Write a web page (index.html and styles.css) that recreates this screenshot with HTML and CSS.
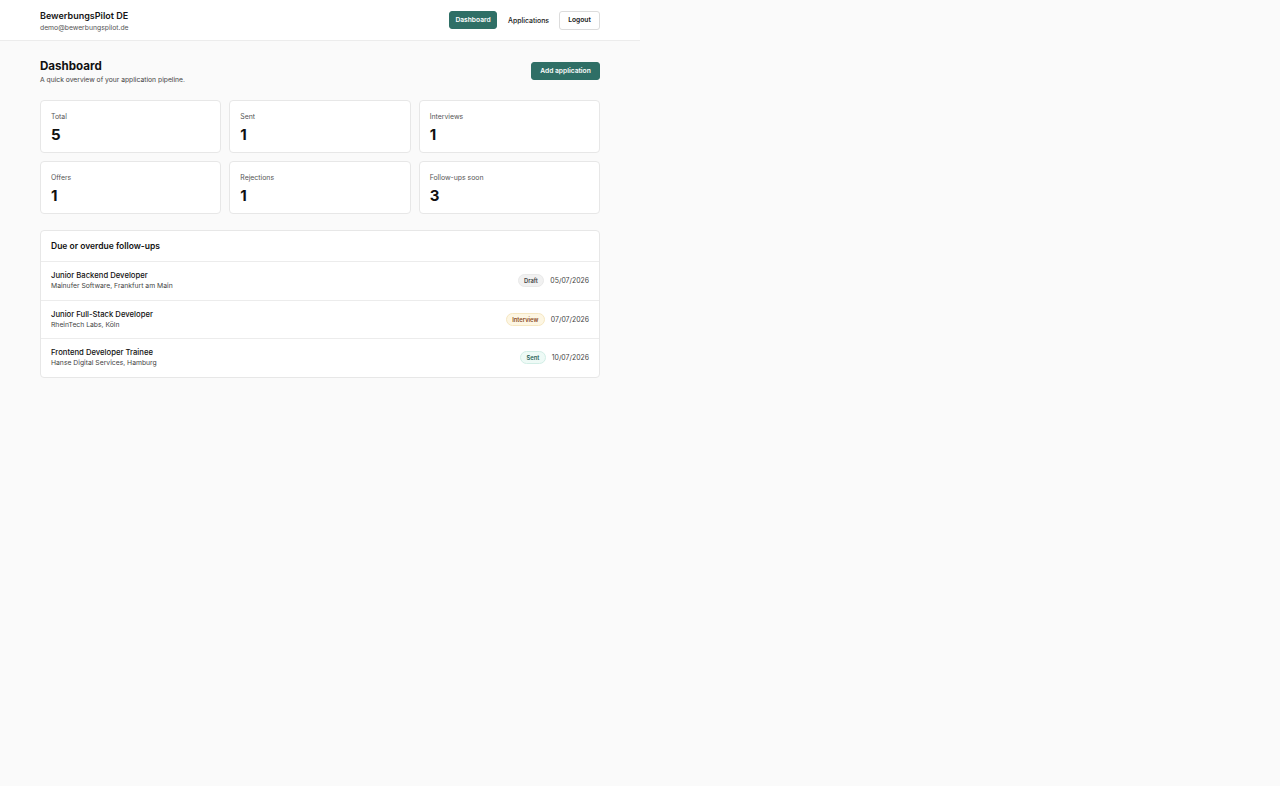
FILE: index.html
```html
<!DOCTYPE html>
<html lang="en">
<head>
<meta charset="utf-8">
<title>BewerbungsPilot DE – Dashboard</title>
<link rel="stylesheet" href="styles.css">
</head>
<body>
<div class="page">
  <header class="topbar">
    <div class="brand">
      <div class="brand-name">BewerbungsPilot DE</div>
      <div class="brand-email">demo@bewerbungspilot.de</div>
    </div>
    <nav class="nav">
      <a class="btn btn-primary nav-btn">Dashboard</a>
      <a class="nav-link">Applications</a>
      <a class="btn btn-outline nav-btn">Logout</a>
    </nav>
  </header>

  <main class="main">
    <div class="title-row">
      <div>
        <h1 class="title">Dashboard</h1>
        <p class="subtitle">A quick overview of your application pipeline.</p>
      </div>
      <a class="btn btn-primary add-btn">Add application</a>
    </div>

    <section class="stats">
      <div class="stat"><div class="stat-label">Total</div><div class="stat-value">5</div></div>
      <div class="stat"><div class="stat-label">Sent</div><div class="stat-value">1</div></div>
      <div class="stat"><div class="stat-label">Interviews</div><div class="stat-value">1</div></div>
      <div class="stat"><div class="stat-label">Offers</div><div class="stat-value">1</div></div>
      <div class="stat"><div class="stat-label">Rejections</div><div class="stat-value">1</div></div>
      <div class="stat"><div class="stat-label">Follow-ups soon</div><div class="stat-value">3</div></div>
    </section>

    <section class="panel">
      <h2 class="panel-title">Due or overdue follow-ups</h2>
      <div class="row">
        <div class="row-text">
          <div class="row-title">Junior Backend Developer</div>
          <div class="row-sub">Mainufer Software, Frankfurt am Main</div>
        </div>
        <div class="row-meta">
          <span class="badge badge-draft">Draft</span>
          <span class="date">05/07/2026</span>
        </div>
      </div>
      <div class="row">
        <div class="row-text">
          <div class="row-title">Junior Full-Stack Developer</div>
          <div class="row-sub">RheinTech Labs, Köln</div>
        </div>
        <div class="row-meta">
          <span class="badge badge-interview">Interview</span>
          <span class="date">07/07/2026</span>
        </div>
      </div>
      <div class="row">
        <div class="row-text">
          <div class="row-title">Frontend Developer Trainee</div>
          <div class="row-sub">Hanse Digital Services, Hamburg</div>
        </div>
        <div class="row-meta">
          <span class="badge badge-sent">Sent</span>
          <span class="date">10/07/2026</span>
        </div>
      </div>
    </section>
  </main>
</div>
</body>
</html>
```

FILE: styles.css
```css
* { box-sizing: border-box; }

html, body {
  margin: 0;
  padding: 0;
  background: #fafafa;
  font-family: Inter, "Liberation Sans", Arial, sans-serif;
  color: #151515;
  min-height: 786px;
}

.page {
  width: 640px;
}

.topbar {
  height: 41px;
  background: #ffffff;
  border-bottom: 1px solid #ececec;
  padding: 0 40px;
  display: flex;
  align-items: center;
  justify-content: space-between;
}

.brand {
  padding-top: 2px;
}

.brand-name {
  font-size: 9px;
  font-weight: 600;
  line-height: 12px;
  color: #151515;
}

.brand-email {
  font-size: 6.8px;
  line-height: 10px;
  color: #555;
  margin-top: 1px;
}

.nav {
  display: flex;
  align-items: center;
  gap: 10px;
}

.btn {
  display: inline-flex;
  align-items: center;
  justify-content: center;
  border-radius: 3px;
  font-size: 6.7px;
  font-weight: 600;
  line-height: 1;
}

.btn-primary {
  background: #2f6f66;
  color: #ffffff;
  border: 1px solid #2f6f66;
}

.btn-outline {
  background: #ffffff;
  color: #151515;
  border: 1px solid #dcdcdc;
}

.nav-btn {
  height: 18px;
  width: 48px;
}

.btn-outline.nav-btn {
  height: 19px;
  width: 41px;
}

.nav-link {
  font-size: 6.9px;
  font-weight: 500;
  color: #151515;
  margin-left: 1px;
}

.main {
  padding: 17px 40px 0;
}

.title-row {
  display: flex;
  justify-content: space-between;
  align-items: flex-start;
}

.title {
  margin: 0;
  font-size: 11.6px;
  font-weight: 650;
  line-height: 16px;
  color: #111;
}

.subtitle {
  margin: 1px 0 0;
  font-size: 6.75px;
  line-height: 10px;
  color: #444;
}

.add-btn {
  margin-top: 4px;
  height: 18px;
  width: 69px;
}

.stats {
  margin-top: 15px;
  display: grid;
  grid-template-columns: repeat(3, 1fr);
  grid-auto-rows: 53px;
  gap: 8px;
}

.stat {
  background: #ffffff;
  border: 1px solid #e7e7e7;
  border-radius: 4px;
  padding: 11px 10px 0;
}

.stat-label {
  font-size: 6.9px;
  line-height: 9px;
  color: #555;
}

.stat-value {
  margin-top: 5px;
  font-size: 15px;
  font-weight: 650;
  line-height: 18px;
  color: #111;
}

.panel {
  margin-top: 16px;
  background: #ffffff;
  border: 1px solid #e7e7e7;
  border-radius: 4px;
}

.panel-title {
  margin: 0;
  height: 30px;
  padding: 0 10px;
  display: flex;
  align-items: center;
  font-size: 8.5px;
  font-weight: 600;
  color: #111;
}

.row {
  height: 38.5px;
  border-top: 1px solid #ececec;
  padding: 0 10px;
  display: flex;
  align-items: center;
  justify-content: space-between;
}

.row-title {
  font-size: 7.7px;
  font-weight: 500;
  line-height: 11px;
  color: #111;
}

.row-sub {
  margin-top: 0;
  font-size: 6.8px;
  line-height: 10px;
  color: #444;
}

.row-meta {
  display: flex;
  align-items: center;
  gap: 6px;
}

.badge {
  display: inline-flex;
  align-items: center;
  height: 13px;
  padding: 0 5.5px;
  border-radius: 999px;
  font-size: 5.8px;
  font-weight: 600;
  border: 1px solid transparent;
}

.badge-draft {
  background: #f1f1f1;
  border-color: #e9e9e9;
  color: #444;
}

.badge-interview {
  background: #fdf6e3;
  border-color: #f6e7c2;
  color: #8a4a1c;
}

.badge-sent {
  background: #eefaf6;
  border-color: #d2eee6;
  color: #1f5e55;
}

.date {
  font-size: 6.9px;
  color: #444;
}
```
